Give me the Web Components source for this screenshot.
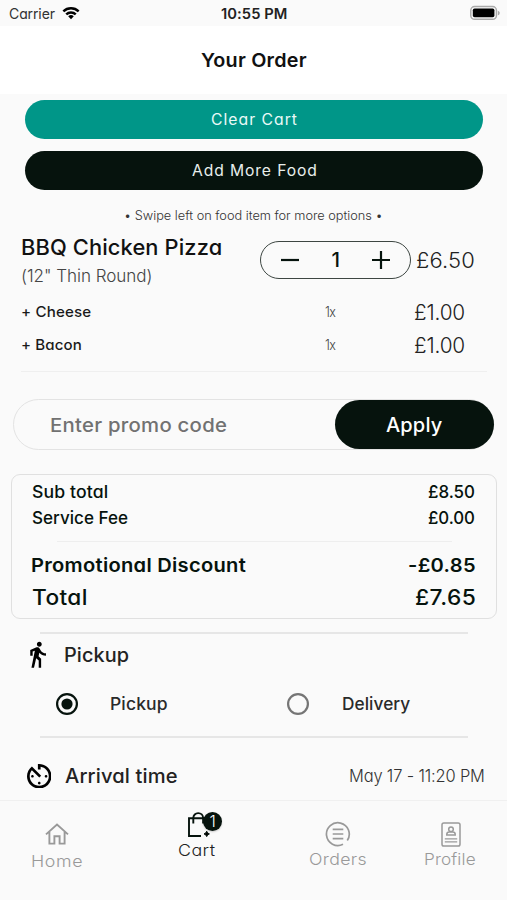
<!DOCTYPE html>
<html lang="en">
<head>
<meta charset="utf-8">
<title>Your Order</title>
<style>
html,body{margin:0;background:#fafafa}
body{width:507px;height:900px;overflow:hidden;font-family:Inter,"Liberation Sans",sans-serif;color:#06130d}
</style>
</head>
<body>
<order-screen></order-screen>
<script>
const BASE = ':host{box-sizing:border-box}*{box-sizing:border-box}svg{display:block;flex:none}';
function define(name, render, after) {
  customElements.define(name, class extends HTMLElement {
    connectedCallback() {
      if (this.shadowRoot) return;
      this.attachShadow({ mode: 'open' }).innerHTML = render(this);
      if (after) after(this);
    }
  });
}

/* Single line of text, widened and tracked so that its ink spans the width in "w". */
const pen = document.createElement('canvas').getContext('2d');
define('ui-text', el => {
  const a = (n, d) => el.getAttribute(n) || d;
  return `<style>:host{display:block;flex:none;width:${a('w')}px;height:${a('h', 24)}px;line-height:${a('h', 24)}px;font-size:${a('s', 16)}px;font-weight:${a('b', 400)};color:${a('c', 'inherit')};white-space:nowrap;font-feature-settings:"cv11","calt" 0}span{display:inline-block;transform-origin:0 50%}</style><span>${el.getAttribute('t').replace(/"/g, '&quot;')}</span>`;
}, el => {
  const span = el.shadowRoot.querySelector('span'), cs = getComputedStyle(el), text = span.textContent;
  pen.font = `${cs.fontWeight} ${cs.fontSize} Inter, "Liberation Sans", sans-serif`;
  const m = pen.measureText(text), left = -m.actualBoundingBoxLeft, right = m.width - m.actualBoundingBoxRight;
  const ink = span.getBoundingClientRect().width - left - right, width = +el.getAttribute('w');
  let scale = 1;
  if (text.length > 1) {
    scale = Math.min(1.08, Math.pow(width / ink, el.hasAttribute('spaced') ? 0.25 : 0.7));
    span.style.letterSpacing = ((width / scale - ink) / (text.length - 1)) + 'px';
    span.style.transform = `scaleX(${scale})`;
  }
  span.style.marginLeft = -left * scale + 'px';
});

define('ui-rule', el => `<style>:host{display:block;height:${el.getAttribute('t') || 1}px;background:${el.getAttribute('c') || '#e6e6e6'}}</style>`);

const ICONS = {
  wifi: ['0 0 20 15', '<g fill="none" stroke="#000" stroke-width="2.7"><path d="M1.5 5.6a12.2 12.2 0 0 1 17 0"/><path d="M4.7 9a7.6 7.6 0 0 1 10.6 0"/></g><path d="M6.9 11.1a4.6 4.6 0 0 1 6.2 0L10 14.4z"/>'],
  battery: ['0 0 32 16', '<rect x=".8" y="1.3" width="26.5" height="13.2" rx="4" fill="#fafafa" stroke="#aaa" stroke-width="1.5"/><rect x="2.9" y="3.3" width="22.3" height="9.2" rx="1.8"/><path d="M28.8 5.6c2.5.8 2.5 4 0 4.8z" fill="#aaa"/>'],
  walk: ['0 0 24 24', '<path d="M13.5 5.5c1.1 0 2-.9 2-2s-.9-2-2-2-2 .9-2 2 .9 2 2 2zM9.8 8.9L7 23h2.1l1.8-8 2.1 2v6h2v-7.5l-2.1-2 .6-3C14.8 12 16.8 13 19 13v-2c-1.9 0-3.5-1-4.3-2.4l-1-1.6c-.4-.6-1-1-1.7-1-.3 0-.5.1-.8.1L6 8.3V13h2V9.6l1.8-.7"/>'],
  timer: ['3 3 18 18', '<path d="M11 17c0 .55.45 1 1 1s1-.45 1-1-.45-1-1-1-1 .45-1 1zm0-14v4h2V5.08c3.39.49 6 3.39 6 6.92 0 3.87-3.13 7-7 7s-7-3.13-7-7c0-1.68.59-3.22 1.58-4.42L12 13l1.41-1.41-6.8-6.8v.02C4.42 6.45 3 9.05 3 12c0 4.97 4.02 9 9 9 4.97 0 9-4.03 9-9s-4.03-9-9-9h-1zm7 9c0-.55-.45-1-1-1s-1 .45-1 1 .45 1 1 1 1-.45 1-1zM6 12c0 .55.45 1 1 1s1-.45 1-1-.45-1-1-1-1 .45-1 1z"/>'],
  home: ['0 0 24 22', '<path d="M1 11.4 12 1.6l11 9.8M4.4 9v11.6h5v-7.3h5.2v7.3h5V9" fill="none" stroke="#999" stroke-width="1.9"/>'],
  bag: ['0 0 24 26', '<g fill="none" stroke="#06130d" stroke-width="1.9"><path d="M15 24H3V6.2h17.5V13"/><path d="M7.3 11.5V6a4.9 4.9 0 0 1 9.8 0v5.5"/></g><path d="M20.7 19.2q.5 2.2 2.7 2.700-2.200.5-2.700 2.700-.5-2.200-2.700-2.700 2.200-.5 2.700-2.700z" stroke="#06130d" stroke-width="1"/>'],
  orders: ['0 0 26 26', '<g fill="none" stroke="#999" stroke-width="1.7"><path d="M18 23.300A11.400 11.400 0 1 1 22.300 19.500"/><path d="M7.700 8.400h10.600M7.700 13h10.600M7.700 17.600h10.600"/></g>'],
  profile: ['0 0 20 25', '<g fill="none" stroke="#999" stroke-width="1.5"><rect x="1" y="1" width="18" height="23" rx="1.800"/><circle cx="10" cy="7.300" r="2.300"/><path d="M5.800 12.900v-.6q0-2.200 2.600-2.200h3.200q2.600 0 2.600 2.200v.6z"/><path d="M3.800 16.800h12.400M3.800 19.900h12.400" stroke-width="1.300"/></g>'],
  minus: ['0 0 18 18', '<path d="M0 9h18" stroke="#06130d" stroke-width="2.200"/>'],
  plus: ['0 0 18 18', '<path d="M0 9h18M9 0v18" stroke="#06130d" stroke-width="2.200"/>'],
  on: ['0 0 22 22', '<circle cx="11" cy="11" r="9.900" fill="none" stroke="#06130d" stroke-width="2.200"/><circle cx="11" cy="11" r="5.600" fill="#06130d"/>'],
  off: ['0 0 22 22', '<circle cx="11" cy="11" r="9.900" fill="none" stroke="#757575" stroke-width="2.200"/>']
};
define('ui-icon', el => {
  const [box, body] = ICONS[el.getAttribute('name')];
  const w = el.getAttribute('w'), h = el.getAttribute('h') || w;
  return `<style>${BASE}:host{display:block;flex:none;width:${w}px;height:${h}px}</style><svg width="${w}" height="${h}" viewBox="${box}">${body}</svg>`;
});

define('status-bar', () => `<style>${BASE}:host{display:grid;grid-template-columns:1fr auto 1fr;align-items:center;height:26px;padding:2px 6px 0 9px}
.l{display:flex;align-items:center;gap:6px}.r{justify-self:end;margin-top:-2px}.t{margin-left:-3px}</style>
<div class="l"><ui-text t="Carrier" w="46.500" s="14.500" c="#333"></ui-text><ui-icon name="wifi" w="18" h="14" style="margin-top:-2px"></ui-icon></div>
<ui-text class="t" t="10:55 PM" w="66" s="14.500" b="600" c="#222"></ui-text>
<ui-icon class="r" name="battery" w="31" h="16"></ui-icon>`);

define('page-header', () => `<style>${BASE}:host{display:flex;justify-content:center;align-items:center;height:68px;padding-top:1px;background:#fff}</style><slot></slot>`);

define('pill-button', el => `<style>${BASE}:host{display:flex;justify-content:center;align-items:center;height:39px;border-radius:25px;background:${el.getAttribute('bg') || '#06130d'};color:#fff}</style><slot></slot>`);

define('qty-stepper', () => `<style>${BASE}:host{display:flex;align-items:center;justify-content:space-between;width:151px;height:37.500px;padding:0 20px;border:1.300px solid #3d4642;border-radius:20px}</style>
<ui-icon name="minus" w="18"></ui-icon><ui-text t="1" w="8" s="20.500" b="500"></ui-text><ui-icon name="plus" w="18"></ui-icon>`);

define('extra-row', el => `<style>${BASE}:host{display:grid;grid-template-columns:303px 90px 1fr;align-items:center;height:33px}</style>
<ui-text t="${el.getAttribute('label')}" w="${el.getAttribute('w')}" s="14.600" b="500" c="#1a1a1a"></ui-text><ui-text t="1x" w="11" s="14.500" b="300" c="#444"></ui-text><ui-text t="£1.00" w="49" s="21.500" b="300" c="#222"></ui-text>`);

define('cart-item', () => `<style>${BASE}:host{display:block;padding:0 20px 0 22px}
.head{display:flex;height:56px}.name{width:238px;margin-top:-1px}.price{margin:7px 0 0 6.500px}qty-stepper{margin-top:5px}.ex{padding:3px 0 10px}ui-rule{margin-left:-1px}</style>
<div class="head"><div class="name"><ui-text t="BBQ Chicken Pizza" w="199" s="21.300" b="500" c="#111"></ui-text><ui-text t='(12" Thin Round)' w="129.500" h="33" s="17.300" b="300" c="#444"></ui-text></div>
<qty-stepper></qty-stepper><ui-text class="price" t="£6.50" w="56.500" h="34" s="21.500" b="300" c="#222"></ui-text></div>
<div class="ex"><extra-row label="+ Cheese" w="68.500"></extra-row><extra-row label="+ Bacon" w="59"></extra-row></div><ui-rule c="#efefef"></ui-rule>`);

define('promo-field', () => `<style>${BASE}:host{display:flex;align-items:center;justify-content:space-between;height:51px;margin:27px 13px 0;padding-left:37.500px;border:1px solid #e3e3e3;border-radius:26px}
pill-button{width:159.500px;height:49px;margin-right:-1px}ui-text{margin-top:1px}</style>
<ui-text t="Enter promo code" w="175.500" s="19.300" b="500" c="#717171"></ui-text><pill-button><ui-text t="Apply" w="56" s="19.500" b="500"></ui-text></pill-button>`);

define('sum-row', () => `<style>${BASE}:host{display:flex;justify-content:space-between;align-items:center}</style><slot></slot>`);
define('order-summary', () => `<style>${BASE}:host{display:block;height:145px;margin:24px 10.500px 0 11px;padding:4px 20.500px 0 20px;border:1px solid #e0e0e0;border-radius:9px}
sum-row{height:26px}ui-rule{margin:10px 23px 8px 25px}.b{height:31px}</style>
<sum-row><ui-text t="Sub total" w="76" s="17" b="500"></ui-text><ui-text t="£8.50" w="47" s="17" b="500"></ui-text></sum-row>
<sum-row><ui-text t="Service Fee" w="96" s="17" b="500"></ui-text><ui-text t="£0.00" w="47" s="17" b="500"></ui-text></sum-row>
<ui-rule c="#eee"></ui-rule>
<sum-row class="b"><ui-text t="Promotional Discount" w="214" s="19" b="600"></ui-text><ui-text t="-£0.85" w="65.500" s="19" b="600"></ui-text></sum-row>
<sum-row class="b"><ui-text t="Total" w="54" s="21.200" b="500"></ui-text><ui-text t="£7.65" w="58.500" s="21.200" b="500"></ui-text></sum-row>`);

define('fulfilment-options', () => `<style>${BASE}:host{display:block;padding-top:13px}
ui-rule{margin:0 39px 0 40px}
.h{display:flex;align-items:center;height:42px;padding-left:23px;gap:13.500px}.h ui-icon{margin-top:-2px}
.o{display:grid;grid-template-columns:55.500px 175.500px 55.500px 1fr;align-items:center;height:53px;margin-top:1px;padding-left:56px}
.a{display:flex;align-items:center;height:62px;margin-top:7px;padding:0 23.500px 0 26.700px}.a .d{margin-left:auto}.a .n{margin-left:14px}</style>
<ui-rule t="2" c="#e6e6e6"></ui-rule>
<div class="h"><ui-icon name="walk" w="29"></ui-icon><ui-text t="Pickup" w="64" s="19.500" b="500" c="#222"></ui-text></div>
<div class="o"><ui-icon name="on" w="22"></ui-icon><ui-text t="Pickup" w="56" s="17" b="500" c="#2a2a2a"></ui-text><ui-icon name="off" w="22"></ui-icon><ui-text t="Delivery" w="67.500" s="17" b="500" c="#2a2a2a"></ui-text></div>
<ui-rule t="2" c="#e6e6e6" style="margin-top:6px"></ui-rule>
<div class="a"><ui-icon name="timer" w="24.500"></ui-icon><ui-text class="n" t="Arrival time" w="112" s="19.500" b="500" c="#222"></ui-text><ui-text class="d" t="May 17 - 11:20 PM" w="133.500" s="17.300" b="300" c="#333"></ui-text></div>`);

define('tab-item', el => {
  const a = n => el.getAttribute(n);
  return `<style>${BASE}:host{display:flex;flex-direction:column;align-items:center;padding-top:${a('top')}px;width:80px}
.i{position:relative;height:${a('ih')}px}.i ::slotted(*){position:absolute;left:17px;top:0}ui-text{margin-top:${a('gap')}px}</style>
<div class="i"><ui-icon name="${a('icon')}" w="${a('iw')}" h="${a('ih')}"></ui-icon><slot></slot></div>
<ui-text t="${a('label')}" w="${a('w')}" s="16.500" b="300" h="20" c="${a('c') || '#999'}"></ui-text>`;
});
define('count-badge', () => `<style>${BASE}:host{display:flex;align-items:center;justify-content:center;width:19px;height:19px;border-radius:50%;background:#06130d;color:#fff;box-shadow:0 1px 2px #0003}</style><ui-text t="1" w="5" h="19" s="16" b="300"></ui-text>`);
define('tab-bar', () => `<style>${BASE}:host{display:grid;grid-template-columns:140.500px 140.500px 112.500px 80px;align-items:start;height:100px;border-top:1px solid #f0f0f0;padding-left:17px;background:#fafafa}</style>
<tab-item icon="home" iw="24" ih="22" top="22" gap="6" label="Home" w="50"></tab-item>
<tab-item icon="bag" iw="24" ih="26" top="11" gap="1.500" label="Cart" w="36" c="#222"><count-badge></count-badge></tab-item>
<tab-item icon="orders" iw="26" ih="26" top="20" gap="1.500" label="Orders" w="56"></tab-item>
<tab-item icon="profile" iw="20" ih="25" top="20.500" gap="2" label="Profile" w="50"></tab-item>`);

define('order-screen', () => `<style>${BASE}:host{display:flex;flex-direction:column;width:507px;height:900px;overflow:hidden}
.actions{display:flex;flex-direction:column;gap:12px;padding:6px 24.500px 0 25px}
.hint{display:flex;justify-content:center;height:46px}main{flex:1;min-height:0}</style>
<status-bar></status-bar>
<page-header><ui-text t="Your Order" w="106" s="19" b="600" c="#111"></ui-text></page-header>
<main><div class="actions"><pill-button bg="#009688"><ui-text spaced t="Clear Cart" w="86" s="15.200" c="#eafaf7"></ui-text></pill-button>
<pill-button><ui-text spaced t="Add More Food" w="124.500" s="15.200" c="#e8eeeb"></ui-text></pill-button></div>
<div class="hint"><ui-text t="• Swipe left on food item for more options •" w="256.500" h="51" s="12.800" b="300" c="#333"></ui-text></div>
<cart-item></cart-item><promo-field></promo-field><order-summary></order-summary><fulfilment-options></fulfilment-options></main>
<tab-bar></tab-bar>`);
</script>
</body>
</html>
